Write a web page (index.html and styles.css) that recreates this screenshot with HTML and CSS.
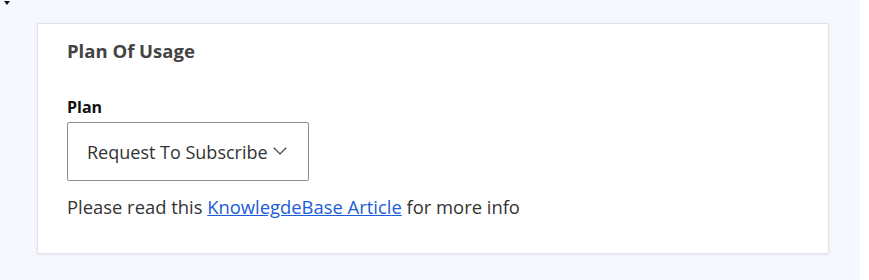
FILE: index.html
```html
<!DOCTYPE html>
<html>
<head>
<meta charset="utf-8">
<link rel="stylesheet" href="styles.css">
</head>
<body>
<div class="page">
  <div class="caret"></div>
  <section class="card">
    <h2 class="card-title">Plan Of Usage</h2>
    <div class="field">
      <label class="field-label">Plan</label>
      <div class="select">
        <span class="select-value">Request To Subscribe</span>
        <svg class="chev" width="14" height="8" viewBox="0 0 14 8"><path d="M0.8 0.8 L7 6.9 L13.2 0.8" fill="none" stroke="#444" stroke-width="1.3"/></svg>
      </div>
    </div>
    <p class="note">Please read this <a href="#" class="link">KnowlegdeBase Article</a> for more info</p>
  </section>
</div>
</body>
</html>
```
FILE: styles.css
```css
html, body {
  margin: 0;
  padding: 0;
  background: #ffffff;
}
body {
  font-family: "Open Sans", "Noto Sans", sans-serif;
}
.page {
  width: 860px;
  height: 280px;
  background: #f5f8fe;
  padding-top: 1px;
  box-sizing: border-box;
}
.caret {
  width: 0;
  height: 0;
  margin-left: 4px;
  border-left: 3px solid transparent;
  border-right: 3px solid transparent;
  border-top: 4px solid #111;
}
.card {
  margin: 18px 0 0 37px;
  width: 792px;
  height: 231px;
  box-sizing: border-box;
  background: #fff;
  border: 1px solid #e3e3e6;
  box-shadow: 0 1px 3px rgba(0,0,0,0.08);
  padding: 15px 29px 0;
}
.card-title {
  margin: 0;
  font-size: 18.5px;
  font-weight: 700;
  color: #444;
  line-height: 24px;
}
.field {
  margin-top: 34px;
}
.field-label {
  display: block;
  font-size: 16px;
  font-weight: 700;
  color: #111;
  line-height: 20px;
}
.select {
  margin-top: 5px;
  width: 242px;
  height: 59px;
  box-sizing: border-box;
  border: 1px solid #8d8d8d;
  border-radius: 2px;
  display: flex;
  align-items: center;
  padding-left: 19px;
}
.select-value {
  font-size: 18px;
  color: #333;
}
.chev {
  margin-left: 5px;
  margin-top: -2px;
}
.note {
  margin: 14px 0 0;
  font-size: 18.4px;
  color: #333;
  line-height: 24px;
}
.link {
  color: #1a5dd6;
  text-decoration: underline;
}
```
